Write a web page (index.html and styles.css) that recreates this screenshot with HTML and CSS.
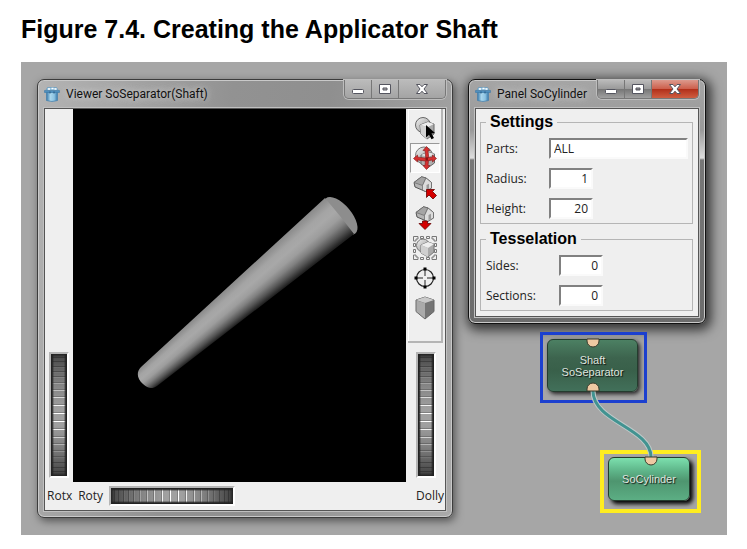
FILE: index.html
```
<!DOCTYPE html>
<html lang="en">
<head>
<meta charset="utf-8">
<title>Figure 7.4. Creating the Applicator Shaft</title>
<link rel="stylesheet" href="styles.css">
</head>
<body>
<svg class="defs" aria-hidden="true">
  <defs>
    <linearGradient id="steel" x1="0" y1="0" x2="1" y2="1"><stop offset="0" stop-color="#f4f4f4"/><stop offset="1" stop-color="#8a8a8a"/></linearGradient>
    <linearGradient id="boxblue" x1="0" y1="0" x2="1" y2="0"><stop offset="0" stop-color="#3576a8"/><stop offset=".35" stop-color="#a9d6ec"/><stop offset=".7" stop-color="#8cc3e2"/><stop offset="1" stop-color="#3576a8"/></linearGradient>
    <symbol id="app" viewBox="0 0 16 16">
      <path d="M2.500 6h11v8.500q-5.500 2-11 0z" fill="url(#boxblue)" stroke="#4a83ad" stroke-width=".8"/>
      <path d="M.5 4.500h15v2H.5z" fill="#4f8fbd" stroke="#3d7aa8" stroke-width=".6"/>
      <path d="M2 4l1.500-2.500h9L14 4z" fill="#9cc9e4" stroke="#5b92b8" stroke-width=".6"/>
      <path d="M4 3h2M7.500 2.500h2M10.500 3h2" stroke="#fff" stroke-width="1.500"/>
      <path d="M6 5.500v2M10 5.500v2" stroke="#245780"/>
    </symbol>
    <symbol id="minimize" viewBox="0 0 14 12"><rect x="1.500" y="6.500" width="11" height="4" rx="1" fill="#fff" stroke="#54555f"/></symbol>
    <symbol id="maximize" viewBox="0 0 14 12"><path d="M1.500 1.500h11v9h-11zM5 5v2h4V5z" fill="#fff" fill-rule="evenodd" stroke="#54555f"/></symbol>
    <symbol id="close" viewBox="0 0 14 12"><path d="M1.500 1.500h3.500L7 3.800l2-2.300h3.500L9 6l3.500 4.500H9L7 8.200l-2 2.300H1.500L5 6z" fill="#fff" stroke="#54555f"/></symbol>
    <symbol id="pick" viewBox="0 0 24 24">
      <circle cx="10" cy="9" r="7.500" fill="url(#steel)" stroke="#666"/>
      <path d="M7 9l8-3 6 2v10l-7 5-6-5z" fill="#aaa" stroke="#666"/>
      <path d="M7 9l8-3 6 2-6 3z" fill="#eee"/><path d="M7 9l8 2-1 12-6-5z" fill="#d2d2d2"/>
      <path d="M13 9l9 8-3.500.5 2.500 4.500-2.500 1.200-2.500-4.500-3 2.800z" fill="#000"/>
    </symbol>
    <symbol id="rotate" viewBox="0 0 24 24">
      <circle cx="11" cy="9.500" r="8.500" fill="url(#steel)" stroke="#777"/>
      <path d="M8 9l7-3 6.500 2v9l-7 5-6.500-4z" fill="#b0b0b0" stroke="#666"/>
      <path d="M8 9l7-3 6.500 2-6 3z" fill="#e4e4e4"/>
      <g fill="#d62f2f" stroke="#8c2323" stroke-width=".7">
        <path d="M13.500.5l3.500 4h-2q1.500 8 0 15h2l-3.500 4-3.500-4h2q1.500-8 0-15h-2z"/>
        <path d="M.5 12.500l4-3.500v2q7.500 2 15 0V9l4 3.500-4 3.500v-2q-7.500 2-15 0v2z"/>
      </g>
      <path d="M12.500 11.500h2.500v3h-2.500z" fill="#8c1111"/>
    </symbol>
    <symbol id="house" viewBox="0 0 20 16">
      <path d="M1 6.500L8.500.8 13 2l5.500 4.500V12l-6 3.500L2 11z" fill="#b5b5b5" stroke="#555"/>
      <path d="M1 6.500L8.500.8 13 2 9.500 9.500z" fill="#a5a5a5" stroke="#666" stroke-width=".7"/>
      <path d="M9.500 9.500L13 2l5.500 4.500V12l-6 3.500-3-1.500z" fill="#dcdcdc" stroke="#666" stroke-width=".7"/>
      <path d="M13.500 9l2.500-1.300v5l-2.500 1.500z" fill="#999"/>
    </symbol>
    <symbol id="home" viewBox="0 0 24 24">
      <use href="#house" x="0" y="0" width="20" height="16"/>
      <path d="M13.500 13.500h8l-2 2 4 4-3.500 3.500-4-4-2.500 2.500z" fill="#d40000" stroke="#600" stroke-width=".8"/>
    </symbol>
    <symbol id="sethome" viewBox="0 0 24 24">
      <use href="#house" x="2" y="0" width="20" height="16"/>
      <path d="M9.500 15h5v2.500H18l-6 6-6-6h3.500z" fill="#d40000" stroke="#600" stroke-width=".8"/>
    </symbol>
    <symbol id="viewall" viewBox="0 0 24 24">
      <g fill="none" stroke="#777"><path d="M.5 5V.5H5V3H3v2zM19 .5h4.500V5H21V3h-2zM.5 19v4.500H5V21H3v-2zM19 23.500h4.500V19H21v2h-2z"/><path d="M7.500.5h3v2h-3zM13.500.5h3v2h-3zM7.500 21.500h3v2h-3zM13.500 21.500h3v2h-3zM.5 7.500h2v3h-2zM.5 13.500h2v3h-2zM21.500 7.500h2v3h-2zM21.500 13.500h2v3h-2z"/></g>
      <circle cx="10" cy="9.500" r="6.500" fill="url(#steel)" stroke="#777"/>
      <path d="M8 9l7-3 6 2v8l-6 5-7-4z" fill="#aaa" stroke="#777"/><path d="M8 9l7-3 6 2-6 4z" fill="#eee"/><path d="M8 9l7 3v9l-7-4z" fill="#cfcfcf"/>
    </symbol>
    <symbol id="seek" viewBox="0 0 24 24">
      <circle cx="12" cy="12" r="8.500" fill="none" stroke="#222" stroke-width="1.200"/>
      <path d="M12 2v8M12 14v8M2 12h8M14 12h8" stroke="#222"/>
      <path d="M10.500 1.500h3v3h-3zM10.500 19.500h3v3h-3zM1.500 10.500h3v3h-3zM19.500 10.500h3v3h-3z" fill="#000"/>
    </symbol>
    <symbol id="solid" viewBox="0 0 24 24">
      <path d="M3 4l9-3 9 3v11.500L12 23 3 15.500z" fill="#757575" stroke="#666"/>
      <path d="M3 4l9-3 9 3-9 3z" fill="#c9c9c9"/><path d="M3.500 4.500L12 7v15.500l-8.500-7z" fill="#aaa"/>
    </symbol>
  </defs>
</svg>

<main class="figure">
  <h1 class="caption">Figure 7.4. Creating the Applicator Shaft</h1>
  <div class="desktop">

    <section class="window viewer" aria-label="Viewer">
      <header class="titlebar">
        <svg class="app-icon"><use href="#app"/></svg>
        <h2 class="title">Viewer SoSeparator(Shaft)</h2>
        <div class="controls">
          <button type="button" aria-label="Minimize"><svg><use href="#minimize"/></svg></button>
          <button type="button" aria-label="Maximize"><svg><use href="#maximize"/></svg></button>
          <button type="button" class="close" aria-label="Close"><svg><use href="#close"/></svg></button>
        </div>
      </header>
      <div class="client viewer-client">
        <div class="rail rail-left">
          <input class="wheel vertical" id="rotx" type="range">
        </div>
        <div class="scene"><div class="shaft"><div class="shaft-side"></div><svg class="shaft-cap" viewBox="0 0 333 373"><ellipse cx="267.500" cy="107" rx="23" ry="11" transform="rotate(50 267.500 107)" fill="#8d8d8d"/></svg></div></div>
        <div class="rail rail-right">
          <div class="tools">
            <button type="button" aria-label="Pick"><svg><use href="#pick"/></svg></button>
            <button type="button" class="active" aria-label="Rotate" aria-pressed="true"><svg><use href="#rotate"/></svg></button>
            <button type="button" aria-label="Home"><svg><use href="#home"/></svg></button>
            <button type="button" aria-label="Set home"><svg><use href="#sethome"/></svg></button>
            <button type="button" aria-label="View all"><svg><use href="#viewall"/></svg></button>
            <button type="button" aria-label="Seek"><svg><use href="#seek"/></svg></button>
            <button type="button" aria-label="Projection"><svg><use href="#solid"/></svg></button>
          </div>
          <input class="wheel vertical" id="dolly" type="range">
        </div>
        <div class="footer">
          <label for="rotx">Rotx</label>
          <label for="roty">Roty</label>
          <input class="wheel" id="roty" type="range">
          <label class="dolly-label" for="dolly">Dolly</label>
        </div>
      </div>
    </section>

    <div class="side">
      <section class="window panel" aria-label="Panel">
        <header class="titlebar">
          <svg class="app-icon"><use href="#app"/></svg>
          <h2 class="title">Panel SoCylinder</h2>
          <div class="controls">
            <button type="button" aria-label="Minimize"><svg><use href="#minimize"/></svg></button>
            <button type="button" aria-label="Maximize"><svg><use href="#maximize"/></svg></button>
            <button type="button" class="close" aria-label="Close"><svg><use href="#close"/></svg></button>
          </div>
        </header>
        <form class="client form">
          <fieldset class="settings">
            <legend>Settings</legend>
            <label for="parts">Parts:</label><input id="parts" class="wide" type="text" value="ALL">
            <label for="radius">Radius:</label><input id="radius" type="text" value="1">
            <label for="height">Height:</label><input id="height" type="text" value="20">
          </fieldset>
          <fieldset class="tesselation">
            <legend>Tesselation</legend>
            <label for="sides">Sides:</label><input id="sides" type="text" value="0">
            <label for="sections">Sections:</label><input id="sections" type="text" value="0">
          </fieldset>
        </form>
      </section>

      <div class="graph">
        <div class="selection selection-blue"><div class="node node-dark"><span>Shaft</span><span>SoSeparator</span></div></div>
        <div class="selection selection-yellow"><div class="node node-light"><span>SoCylinder</span></div></div>
        <svg class="wires" viewBox="0 0 238 193">
          <path d="M125 67C125 98 183 104 183 133" fill="none" stroke="#bfcaca" stroke-width="5"/>
          <path d="M125 67C125 98 183 104 183 133" fill="none" stroke="#429391" stroke-width="3"/>
          <g fill="#efc9a2" stroke="#3b3b2c" stroke-width="1">
            <path d="M119 15h12v2a6 6 0 0 1-12 0z"/>
            <path d="M119 67h12v-2a6 6 0 0 0-12 0z"/>
            <path d="M177 133h12v2a6 6 0 0 1-12 0z"/>
          </g>
        </svg>
      </div>
    </div>
  </div>
</main>
</body>
</html>
```
FILE: styles.css
```
* { box-sizing: border-box; }

body {
  margin: 0;
  background: #fff;
  color: #222;
  font: 12px/16px "Open Sans", "Noto Sans", sans-serif;
}

button, input { font: inherit; color: inherit; }
.defs { position: absolute; width: 0; height: 0; }

.figure { padding: 14px 20px 14px 21px; }

.caption {
  margin: 0 0 18px;
  color: #000;
  font: bold 25px/30px "Liberation Sans", Arial, sans-serif;
}

.desktop {
  display: flex;
  gap: 15px;
  padding: 17px 21px 17px 16px;
  background: #a6a6a6;
}

/* Windows */
.window {
  display: flex;
  flex-direction: column;
  padding: 0 6px 6px;
  border: 1px solid #3c3c3c;
  border-radius: 7px;
  background: linear-gradient(100deg, #b4b4b4, #929292 40%, #8f8f8f 60%, #aaa);
  box-shadow: inset 0 0 0 1px #c9c9c9, 2px 3px 9px rgba(0, 0, 0, .5);
}

.viewer { flex: 1; min-width: 0; }

.titlebar {
  display: flex;
  align-items: flex-start;
  height: 28px;
}

.app-icon { flex: none; width: 16px; height: 16px; margin-top: 6px; }

.title {
  flex: 1;
  margin: 5px 0 0 6px;
  color: #111;
  font: 12px/18px Roboto, "Open Sans", sans-serif;
  white-space: nowrap;
  text-shadow: 0 0 6px #ccc, 0 0 10px #ccc;
}

.controls {
  display: flex;
  border: 1px solid #777;
  border-top: 0;
  border-radius: 0 0 5px 5px;
  overflow: hidden;
  box-shadow: 0 0 0 1px #bdbdbd;
}

.controls button {
  display: grid;
  place-items: center;
  width: 27px;
  height: 18px;
  padding: 0;
  border: 0;
  border-right: 1px solid #777;
  background: linear-gradient(#bbb, #a4a4a4);
}

.controls .close { width: 46px; border-right: 0; }
.controls svg { width: 14px; height: 12px; }

.client {
  flex: 1;
  border: 1px solid #555;
  background: #efefef;
  box-shadow: 0 0 0 1px #c0c0c0;
}

/* Viewer */
.viewer-client {
  display: grid;
  grid-template: 1fr 28px / 28px 1fr 39px;
}

.rail {
  display: flex;
  flex-direction: column;
  align-items: center;
  justify-content: flex-end;
  padding-bottom: 4px;
}

.rail-right { justify-content: space-between; }

.scene {
  display: grid;
  place-items: center;
  min-height: 373px;
  overflow: hidden;
  background: #000;
}

.shaft { display: grid; width: 333px; height: 373px; }
.shaft > * { grid-area: 1 / 1; }

/* The shading lines converge on the vanishing point of the shaft. */
.shaft-side {
  background: conic-gradient(from 47deg at -160px 467px, #808080 0deg, #929292 .8deg, #a4a4a4 1.5deg, #a8a8a8 2.2deg, #9d9d9d 3deg, #808080 3.7deg, #555 4.4deg, #222 5.1deg, #111 6deg);
  clip-path: path("M252 89L68 258C63 263 64 270 70 275C75 280 80 280 84 277L281 125L267 107Z");
}

.shaft-cap { width: 100%; height: 100%; }

.tools {
  display: flex;
  flex-direction: column;
  align-items: center;
  width: 35px;
  height: 234px;
  padding-top: 4px;
  border: solid #b5b5b5;
  border-width: 0 2px 2px 0;
  box-shadow: inset 1px 1px #fff;
}

.tools button {
  display: grid;
  place-items: center;
  width: 30px;
  height: 30px;
  padding: 0;
  border: 1px solid transparent;
  background: none;
}

.tools .active {
  border-color: #999 #fff #fff #999;
  background: #f8f8f8;
}

.tools svg { width: 24px; height: 24px; }

.wheel {
  --axis: to right;
  --across: to bottom;
  appearance: none;
  width: 126px;
  height: 20px;
  margin: 0;
  border: 2px solid;
  border-color: #b5b5b5 #fff #fff #b5b5b5;
  background:
    linear-gradient(var(--across), #222 1px, #2229 2px, transparent 3px calc(100% - 3px), #2229 calc(100% - 2px), #222 calc(100% - 1px)),
    linear-gradient(var(--axis),
      #0000 3px, #0004 3px 4px, #0000 4px 7px, #0004 7px 8px, #0000 8px 12px, #0004 12px 13px, #fff1 13px 14px,
      #0000 14px 17px, #0004 17px 18px, #fff1 18px 19px, #0000 19px 22px, #0004 22px 23px, #fff2 23px 24px,
      #0000 24px 28px, #0003 28px 29px, #fff4 29px 30px, #0000 30px 35px, #0003 35px 36px, #fff7 36px 37px,
      #0000 37px 42px, #0003 42px 43px, #fffa 43px 44px, #0000 44px 50px, #0003 50px 51px, #fffd 51px 52px,
      #0000 52px 58px, #0003 58px 59px, #fff 59px 60px, #0000 60px 66px, #0003 66px 67px, #fff 67px 68px,
      #0000 68px 74px, #0003 74px 75px, #fffd 75px 76px, #0000 76px 82px, #0003 82px 83px, #fff9 83px 84px,
      #0000 84px 89px, #0003 89px 90px, #fff6 90px 91px, #0000 91px 96px, #0003 96px 97px, #fff3 97px 98px,
      #0000 98px 102px, #0003 102px 103px, #fff1 103px 104px, #0000 104px 108px, #0004 108px 109px,
      #0000 109px 113px, #0004 113px 114px, #0000 114px 117px, #0004 117px 118px, #0000 118px),
    linear-gradient(var(--axis), #222, #4c4c4c 3%, #686868 14%, #858585 26%, #a0a0a0 45% 58%, #808080 76%, #606060 88%, #484848 97%, #222);
  background-origin: padding-box;
}

.wheel.vertical {
  --axis: to bottom;
  --across: to right;
  writing-mode: vertical-lr;
  width: 20px;
  height: 126px;
}

.wheel::-webkit-slider-thumb { appearance: none; width: 1px; height: 1px; background: none; }

.footer {
  display: flex;
  grid-column: 1 / -1;
  gap: 6px;
  align-items: center;
  padding: 0 1px 0 2px;
}

.dolly-label { margin-left: auto; }

/* Panel */
.side {
  display: flex;
  flex: none;
  flex-direction: column;
  width: 238px;
}

.panel {
  background: linear-gradient(#a5a5a5, #999 50px, #ddd 78px, #777 80px, #6c6c6c);
  border-color: #111;
  box-shadow: inset 0 0 0 1px #c9c9c9, 2px 3px 12px 3px rgba(0, 0, 0, .7);
}

.panel .controls button { background: linear-gradient(#bbb, #999 50%, #777 52%, #a0a0a0); }
.panel .controls .close { background: linear-gradient(#dc9a8d, #cd604d 48%, #b2301a 52%, #cf5d40); }

.form { padding: 4px 5px 5px 4px; }

fieldset {
  display: grid;
  grid-template-columns: 63px 1fr;
  row-gap: 9px;
  align-items: center;
  min-width: 0;
  margin: 0;
  padding: 7px 4px 4px 5px;
  border: 1px solid #b5b5b5;
}

.tesselation { grid-template-columns: 73px 1fr; margin-top: 6px; }

legend {
  padding: 0 4px;
  color: #000;
  font: bold 16px/18px "Liberation Sans", Arial, sans-serif;
}

fieldset input {
  width: 44px;
  height: 21px;
  padding: 0 3px;
  border: 2px solid;
  border-color: #808080 #fafafa #fafafa #808080;
  border-radius: 0;
  background: #fff;
  text-align: right;
}

fieldset input.wide { width: 100%; text-align: left; }

/* Scene graph */
.graph { position: relative; flex: 1; min-height: 193px; }

.selection { position: absolute; border: 3px solid #1c40cf; }
.selection-blue { left: 72px; top: 8px; width: 107px; height: 71px; padding: 4px 6px 8px 4px; }
.selection-yellow { left: 132px; top: 126px; width: 101px; height: 63px; padding: 3px 7px 8px 4px; border: 4px solid #ffed20; }

.node {
  display: flex;
  flex-direction: column;
  align-items: center;
  justify-content: center;
  height: 100%;
  border: 1px solid #243c2e;
  border-radius: 6px;
  color: #dfe5df;
  font: 11px/12px "Liberation Sans", Arial, sans-serif;
  text-shadow: 1px 1px 1px #111;
  box-shadow: 2px 2px 4px #222;
}

.node-dark { background: linear-gradient(#4c8063, #3d644e 35%, #39604a 60%, #42705a); }
.node-light { background: linear-gradient(#7ce0ae, #5fb68a 30%, #4e956f 55%, #5cae84); box-shadow: 3px 3px 4px #000; }

.wires { position: absolute; left: 0; top: 0; width: 238px; height: 193px; pointer-events: none; }
```
